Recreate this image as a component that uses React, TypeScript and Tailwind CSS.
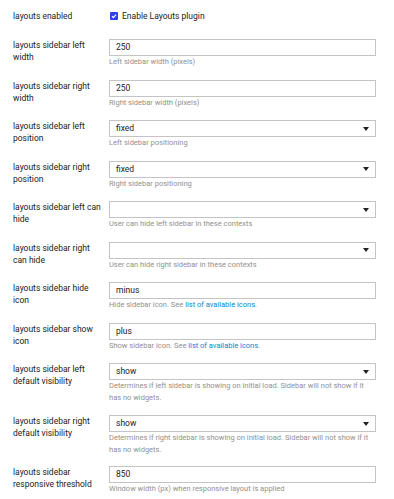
import React from "react";

type Field = {
  label: string;
  kind: "text" | "select";
  value: string;
  help: React.ReactNode;
  pb?: string;
};

const IconsLink = () => (
  <a href="#" className="text-[#0a85d9]">
    list of available icons
  </a>
);

const fields: Field[] = [
  { label: "layouts sidebar left width", kind: "text", value: "250", help: "Left sidebar width (pixels)" },
  { label: "layouts sidebar right width", kind: "text", value: "250", help: "Right sidebar width (pixels)" },
  { label: "layouts sidebar left position", kind: "select", value: "fixed", help: "Left sidebar positioning" },
  { label: "layouts sidebar right position", kind: "select", value: "fixed", help: "Right sidebar positioning" },
  { label: "layouts sidebar left can hide", kind: "select", value: "", help: "User can hide left sidebar in these contexts" },
  { label: "layouts sidebar right can hide", kind: "select", value: "", help: "User can hide right sidebar in these contexts" },
  {
    label: "layouts sidebar hide icon",
    kind: "text",
    value: "minus",
    help: (
      <>
        Hide sidebar icon. See <IconsLink />.
      </>
    ),
  },
  {
    label: "layouts sidebar show icon",
    kind: "text",
    value: "plus",
    help: (
      <>
        Show sidebar icon. See <IconsLink />.
      </>
    ),
  },
  {
    label: "layouts sidebar left default visibility",
    kind: "select",
    value: "show",
    help: "Determines if left sidebar is showing on initial load. Sidebar will not show if it has no widgets.",
    pb: "pb-[11px]",
  },
  {
    label: "layouts sidebar right default visibility",
    kind: "select",
    value: "show",
    help: "Determines if right sidebar is showing on initial load. Sidebar will not show if it has no widgets.",
    pb: "pb-[10px]",
  },
  {
    label: "layouts sidebar responsive threshold",
    kind: "text",
    value: "850",
    help: "Window width (px) when responsive layout is applied",
  },
];

function Control({ field }: { field: Field }) {
  return (
    <div className="flex h-[17px] items-center justify-between border border-[#c4c4c4] bg-white pl-[6px] pr-[6px] text-[8.5px] text-[#222]">
      <span>{field.value}</span>
      {field.kind === "select" && (
        <svg width="6" height="4" viewBox="0 0 6 4">
          <path d="M0 0h6L3 4z" fill="#222" />
        </svg>
      )}
    </div>
  );
}

export default function App() {
  return (
    <main
      className="min-h-[499px] w-[394px] bg-white pl-[13px] pr-[18px] pt-[10px] text-[#222]"
      style={{ fontFamily: "Roboto, 'Liberation Sans', sans-serif" }}
    >
      {/* enabled checkbox row */}
      <div className="mb-[17px] flex">
        <div className="w-[96px] shrink-0 text-[8.5px] leading-[12px]">layouts enabled</div>
        <label className="flex h-[12px] items-center gap-[4px] text-[8.5px]">
          <span className="ml-[1px] flex h-[8px] w-[8px] items-center justify-center rounded-[1px] bg-[#2f3fe6]">
            <svg width="6" height="6" viewBox="0 0 6 6">
              <path d="M1 3.2l1.4 1.4L5 1.6" stroke="white" strokeWidth="1.2" fill="none" />
            </svg>
          </span>
          Enable Layouts plugin
        </label>
      </div>

      {fields.map((f) => (
        <div key={f.label} className={`flex ${f.pb ?? "pb-[11.5px]"}`}>
          <div className="w-[96px] shrink-0 pr-[8px] text-[8.5px] leading-[12px]">{f.label}</div>
          <div className="flex-1">
            <Control field={f} />
            <p className="text-[7.5px] leading-[12px] text-[#919191]">{f.help}</p>
          </div>
        </div>
      ))}
    </main>
  );
}
